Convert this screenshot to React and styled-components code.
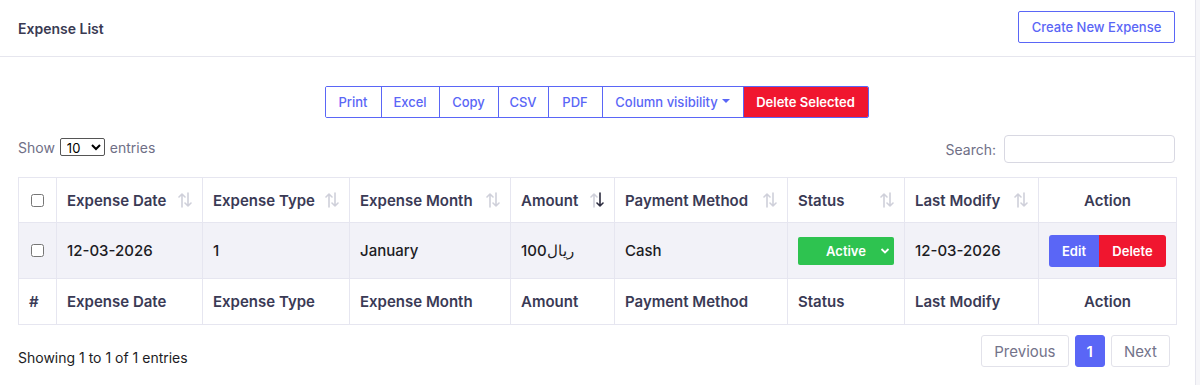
import React from 'react';
import styled, { createGlobalStyle } from 'styled-components';

const GlobalStyle = createGlobalStyle`
  html, body {
    margin: 0;
    padding: 0;
    background: #f6f6f9;
    font-family: Inter, "Noto Sans", sans-serif;
  }
`;

const Card = styled.div`
  width: 1196px;
  min-height: 385px;
  background: #fff;
  border-right: 1px solid #e6e6ee;
  box-sizing: border-box;
`;

const CardHeader = styled.div`
  height: 57px;
  padding: 0 20px 0 18px;
  display: flex;
  align-items: center;
  justify-content: space-between;
  border-bottom: 1px solid #e6e6ee;
  box-sizing: border-box;
`;

const Title = styled.h5`
  margin: 0;
  font-size: 14px;
  font-weight: 600;
  color: #3a3a52;
`;

const OutlineButton = styled.button`
  height: 32px;
  width: 157px;
  margin-top: -2px;
  background: #fff;
  border: 1px solid #5a66f6;
  border-radius: 2px;
  color: #5a66f6;
  font-family: inherit;
  font-size: 13px;
  font-weight: 500;
`;

const CardBody = styled.div`
  padding: 29px 20px 0 18px;
`;

const ButtonGroup = styled.div`
  display: flex;
  justify-content: center;
`;

const GroupInner = styled.div`
  display: flex;
  border: 1px solid #5a66f6;
  border-radius: 2px;
  overflow: hidden;
`;

const GroupButton = styled.button`
  height: 30px;
  width: ${p => p.w}px;
  padding: 0;
  background: ${p => (p.danger ? '#f0162f' : '#fff')};
  color: ${p => (p.danger ? '#fff' : '#5a66f6')};
  border: none;
  border-left: ${p => (p.first ? 'none' : '1px solid #5a66f6')};
  font-family: inherit;
  font-size: 13px;
  font-weight: ${p => (p.danger ? 600 : 500)};
  display: flex;
  align-items: center;
  justify-content: center;
  gap: 4px;
`;

const Caret = styled.span`
  width: 0;
  height: 0;
  border-left: 4px solid transparent;
  border-right: 4px solid transparent;
  border-top: 4px solid #5a66f6;
  margin-top: -2px;
`;

const ControlsRow = styled.div`
  margin-top: 17px;
  height: 28px;
  display: flex;
  align-items: center;
  justify-content: space-between;
  margin-bottom: 14px;
`;

const Label = styled.label`
  font-size: 14px;
  color: #6f6f86;
  display: flex;
  align-items: center;
  gap: 5px;
  margin-top: ${p => p.mt || 0}px;
`;

const LengthSelect = styled.select`
  width: 45px;
  height: 18px;
  font-family: inherit;
  font-size: 13px;
  color: #000;
  border: 1px solid #555;
  border-radius: 2px;
  padding: 0 2px;
  background: #fff;
`;

const SearchInput = styled.input`
  width: 171px;
  height: 28px;
  box-sizing: border-box;
  border: 1px solid #d8d8e2;
  border-radius: 4px;
  margin-left: 3px;
`;

const Table = styled.table`
  width: 1158px;
  table-layout: fixed;
  border-collapse: collapse;
  border: 1px solid #e3e3ee;
`;

const Th = styled.th`
  height: ${p => p.h || 45}px;
  padding: 0 10px;
  border: 1px solid #e6e6f0;
  font-size: 15px;
  font-weight: 600;
  color: #3a3a55;
  text-align: ${p => (p.center ? 'center' : 'left')};
  box-sizing: border-box;
`;

const ThInner = styled.div`
  display: flex;
  align-items: center;
  justify-content: space-between;
`;

const BodyRow = styled.tr`
  background: #f2f2f8;
`;

const Td = styled.td`
  height: 56px;
  padding: 0 10px;
  border: 1px solid #e6e6f0;
  font-size: 15px;
  font-weight: 500;
  color: #1c1c24;
  box-sizing: border-box;
`;

const Check = styled.input`
  width: 13px;
  height: 13px;
  margin: 0 0 0 2px;
  display: block;
`;

const StatusSelect = styled.div`
  width: 96px;
  height: 28px;
  background: #2ec350;
  border-radius: 2px;
  color: #fff;
  font-size: 13px;
  font-weight: 600;
  display: flex;
  align-items: center;
  justify-content: center;
  position: relative;
`;

const Chevron = styled.svg`
  position: absolute;
  right: 4px;
  top: 10px;
`;

const Actions = styled.div`
  display: flex;
`;

const ActionButton = styled.button`
  height: 32px;
  width: ${p => p.w}px;
  border: none;
  padding: 0;
  background: ${p => p.bg};
  color: #fff;
  font-family: inherit;
  font-size: 13px;
  font-weight: 600;
  border-radius: ${p => p.radius};
`;

const Footer = styled.div`
  display: flex;
  justify-content: space-between;
  align-items: flex-start;
  margin-top: 10px;
  padding-right: 5px;
`;

const Info = styled.div`
  font-size: 14px;
  color: #1c1c24;
  margin-top: 14px;
`;

const Pager = styled.div`
  display: flex;
  gap: 6px;
`;

const PageButton = styled.button`
  height: 32px;
  padding: 0 ${p => p.px || 12}px;
  border: 1px solid ${p => (p.active ? '#5a66f6' : '#e2e2ea')};
  background: ${p => (p.active ? '#5a66f6' : '#fff')};
  color: ${p => (p.active ? '#fff' : '#73738a')};
  border-radius: 3px;
  font-family: inherit;
  font-size: 15px;
  font-weight: ${p => (p.active ? 600 : 400)};
`;

const SortIcon = ({ active }) => (
  <svg width="14" height="18" viewBox="0 0 14 18">
    <g fill="none" strokeWidth="1.6" strokeLinecap="round" strokeLinejoin="round">
      <path d="M4 16V3M1 6l3-3 3 3" stroke="#cfd0da" />
      <path d="M10 2v13M7 12l3 3 3-3" stroke={active ? '#2d2d40' : '#cfd0da'} />
    </g>
  </svg>
);

const columns = [
  { label: 'Expense Date', w: 146 },
  { label: 'Expense Type', w: 147 },
  { label: 'Expense Month', w: 161 },
  { label: 'Amount', w: 104, active: true },
  { label: 'Payment Method', w: 173 },
  { label: 'Status', w: 117 },
  { label: 'Last Modify', w: 134 },
];

const groupButtons = [
  ['Print', 55],
  ['Excel', 58],
  ['Copy', 59],
  ['CSV', 50],
  ['PDF', 54],
];

export default function App() {
  return (
    <>
      <GlobalStyle />
      <Card>
        <CardHeader>
          <Title>Expense List</Title>
          <OutlineButton>Create New Expense</OutlineButton>
        </CardHeader>
        <CardBody>
          <ButtonGroup>
            <GroupInner>
              {groupButtons.map(([t, w], i) => (
                <GroupButton key={t} w={w} first={i === 0}>{t}</GroupButton>
              ))}
              <GroupButton w={141}>Column visibility<Caret /></GroupButton>
              <GroupButton w={125} danger>Delete Selected</GroupButton>
            </GroupInner>
          </ButtonGroup>

          <ControlsRow>
            <Label mt={-4}>
              Show
              <LengthSelect defaultValue="10">
                <option>10</option>
                <option>25</option>
                <option>50</option>
              </LengthSelect>
              entries
            </Label>
            <Label>
              Search:
              <SearchInput type="search" />
            </Label>
          </ControlsRow>

          <Table>
            <colgroup>
              <col style={{ width: 38 }} />
              {columns.map(c => <col key={c.label} style={{ width: c.w }} />)}
              <col style={{ width: 138 }} />
            </colgroup>
            <thead>
              <tr>
                <Th><Check type="checkbox" /></Th>
                {columns.map(c => (
                  <Th key={c.label}>
                    <ThInner>{c.label}<SortIcon active={c.active} /></ThInner>
                  </Th>
                ))}
                <Th center>Action</Th>
              </tr>
            </thead>
            <tbody>
              <BodyRow>
                <Td><Check type="checkbox" /></Td>
                <Td>12-03-2026</Td>
                <Td>1</Td>
                <Td>January</Td>
                <Td>100ریال</Td>
                <Td>Cash</Td>
                <Td>
                  <StatusSelect>
                    Active
                    <Chevron width="10" height="8" viewBox="0 0 10 8">
                      <path d="M1.5 2l3.5 3.5L8.5 2" fill="none" stroke="#fff" strokeWidth="1.8" />
                    </Chevron>
                  </StatusSelect>
                </Td>
                <Td>12-03-2026</Td>
                <Td>
                  <Actions>
                    <ActionButton w={50} bg="#5a66f6" radius="3px 0 0 3px">Edit</ActionButton>
                    <ActionButton w={67} bg="#f0162f" radius="0 3px 3px 0">Delete</ActionButton>
                  </Actions>
                </Td>
              </BodyRow>
            </tbody>
            <tfoot>
              <tr>
                <Th h={46}>#</Th>
                {columns.map(c => <Th key={c.label} h={46}>{c.label}</Th>)}
                <Th center h={46}>Action</Th>
              </tr>
            </tfoot>
          </Table>

          <Footer>
            <Info>Showing 1 to 1 of 1 entries</Info>
            <Pager>
              <PageButton>Previous</PageButton>
              <PageButton active px={11}>1</PageButton>
              <PageButton>Next</PageButton>
            </Pager>
          </Footer>
        </CardBody>
      </Card>
    </>
  );
}
